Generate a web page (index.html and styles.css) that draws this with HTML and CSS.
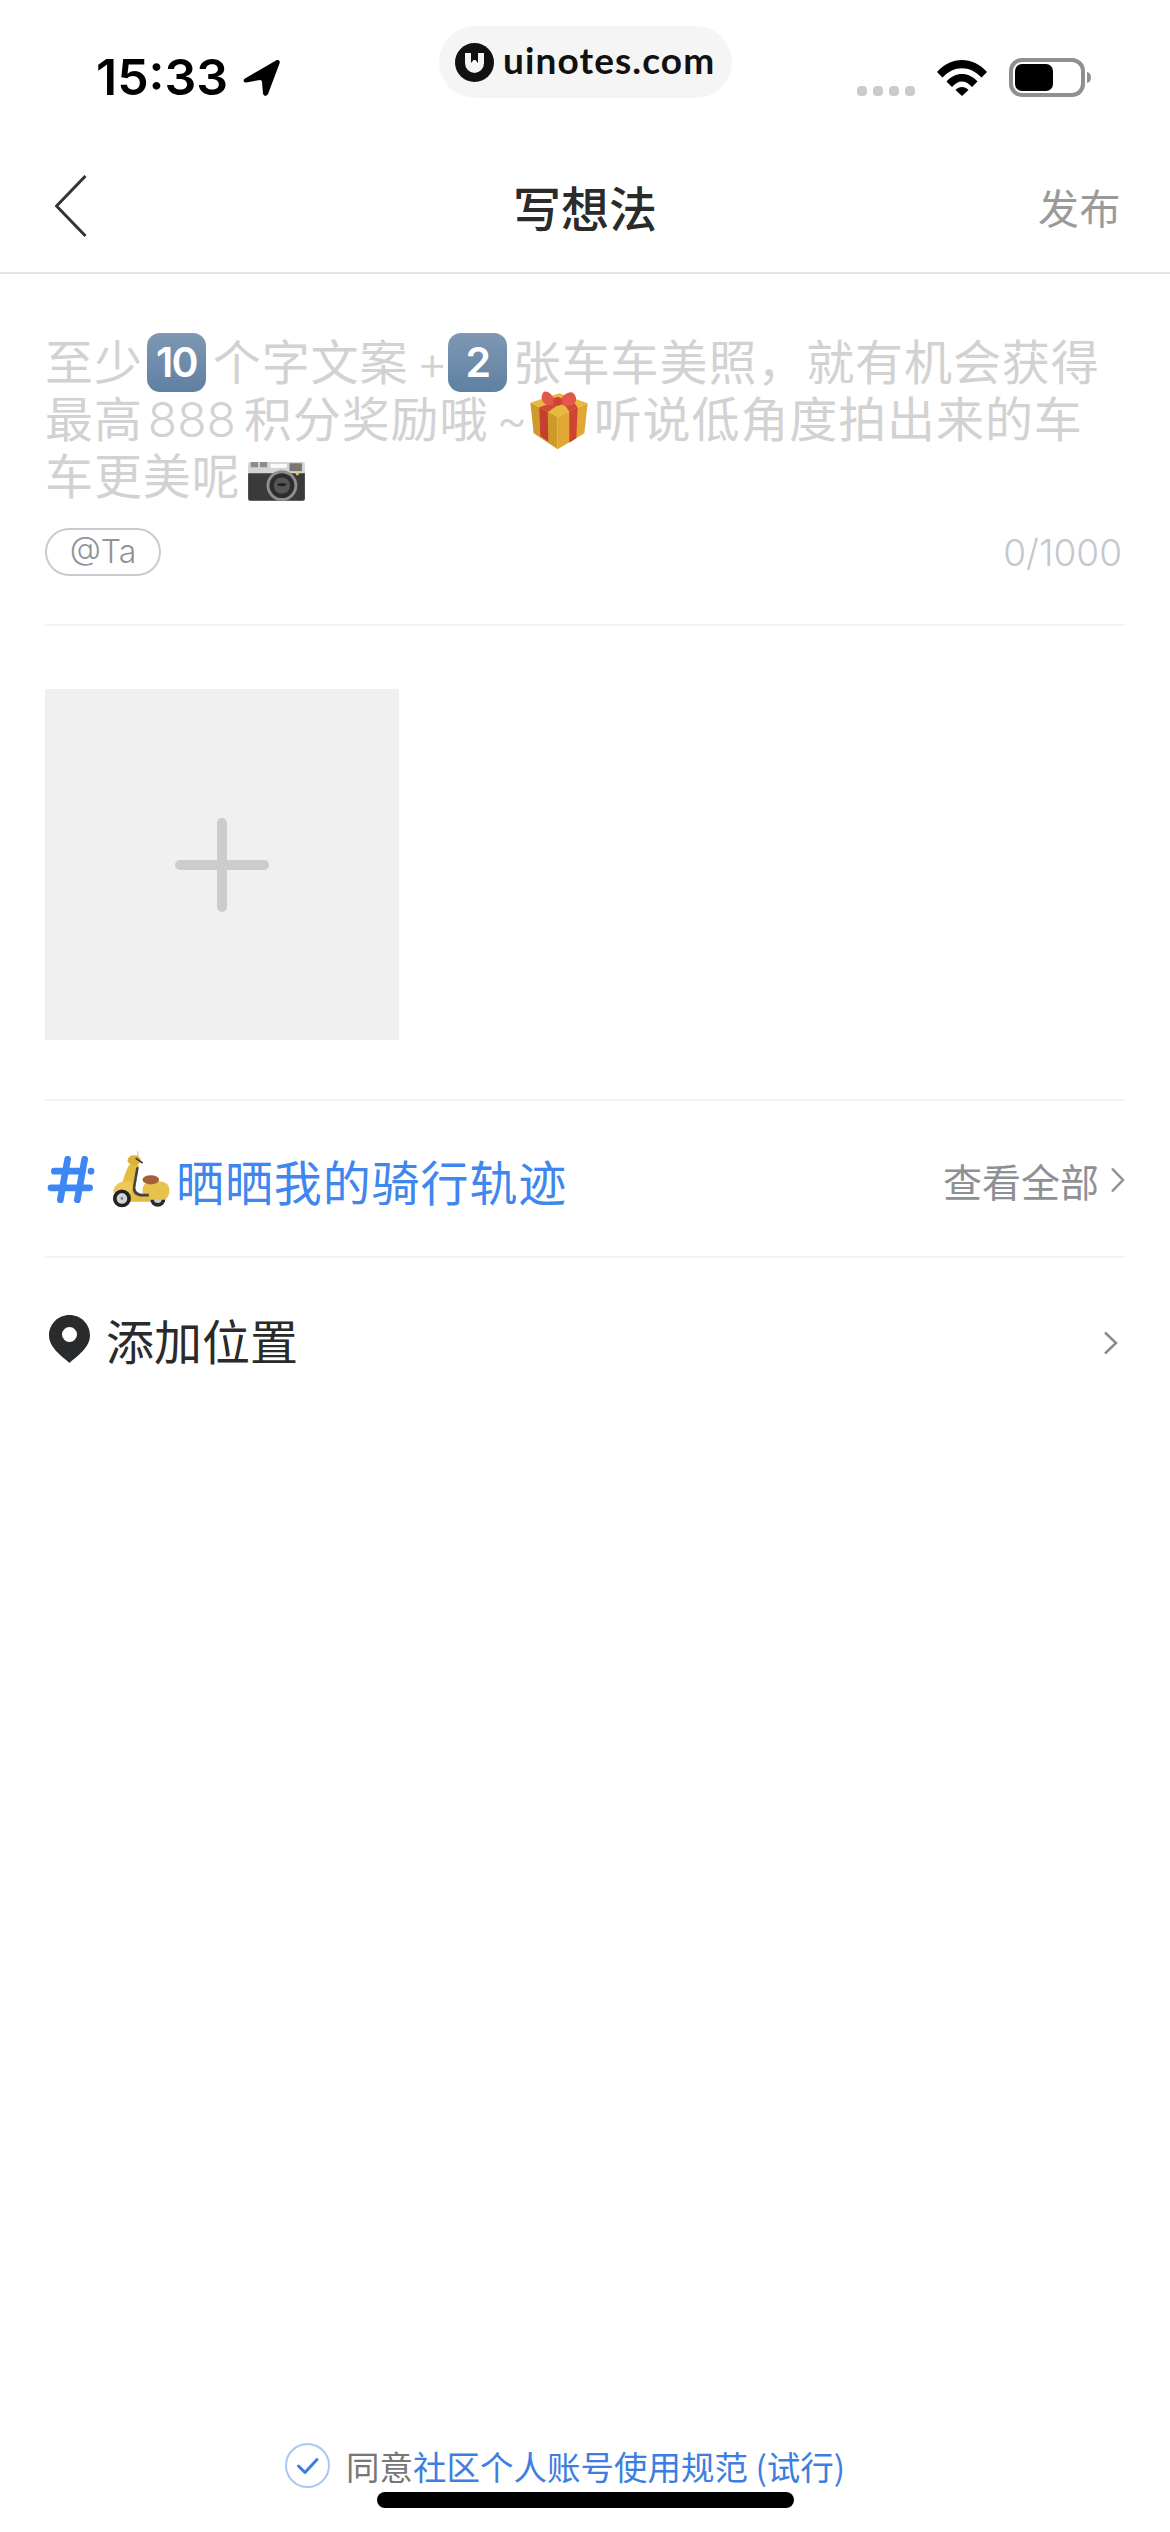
FILE: index.html
```html
<!DOCTYPE html>
<html lang="zh-CN">
<head>
<meta charset="utf-8">
<title>写想法</title>
<link rel="stylesheet" href="styles.css">
</head>
<body>
<div class="page">
  <div class="badge">
    <svg class="badge-logo" viewBox="0 0 39 39"><circle cx="19.5" cy="19.5" r="19.5" fill="#111"/><path d="M10 10h6v10l2.500-3h2l2.500 3V10h6v10a9.500 10 0 0 1-19 0z" fill="#f5f5f5"/></svg>
    <span class="badge-text">uinotes.com</span>
  </div>

  <header class="status">
    <div class="status-left">
      <span class="time">15:33</span>
      <svg class="arrow" viewBox="0 0 38 38"><path d="M2 19.500 33 1.500c2.500-1.300 4.500.5 3.500 3L25 35c-1 2.500-4.500 2.500-5-.5l-1-11.500a2 2 0 0 0-2-2L3 23.500c-3 0-3-2.500-1-4z" fill="#000"/></svg>
    </div>
    <div class="status-right">
      <div class="signal"><i></i><i></i><i></i><i></i></div>
      <svg class="wifi" viewBox="0 0 50 37"><path d="M0 13C14-3 36-3 50 13l-5.500 5.500C33 6 17 6 5.500 18.500z"/><path d="M9.500 22.500C18 12.500 32 12.500 40.500 22.500L35 28C29 20.500 21 20.500 15 28z"/><path d="M18.500 31C22 27 28 27 31.500 31L25 37z"/></svg>
      <svg class="battery" viewBox="0 0 82 39"><rect x="2" y="2" width="72" height="35" rx="11" fill="none" stroke="#8f8f8f" stroke-width="4"/><rect x="6" y="6" width="38" height="27" rx="7" fill="#000"/><path d="M78 14c3 .8 4 3 4 5.500s-1 4.700-4 5.500z" fill="#8f8f8f"/></svg>
    </div>
  </header>

  <nav class="nav">
    <svg class="back" viewBox="0 0 32 62"><path d="M30.500 1 1.500 31l29 30" fill="none" stroke="#333" stroke-width="3"/></svg>
    <h1 class="nav-title">写想法</h1>
    <span class="nav-action">发布</span>
  </nav>

  <main class="content">
    <section class="editor">
      <p class="placeholder">至少<span class="keycap">10</span>个字文案<span class="latin latin-plus">+</span><span class="keycap keycap-single">2</span>张车车美照，就有机会获得<br>最高<span class="latin latin-number">888</span>积分奖励哦<span class="latin latin-tilde">~</span><svg class="emoji" viewBox="24 20 180 180">
        <path d="M28 58 115 30l85 30-90 40z" fill="#e8b83f"/>
        <path d="M28 58l82 42v98l-72-48z" fill="#cf9a2c"/>
        <path d="M110 100l90-40-10 90-80 48z" fill="#e2a732"/>
        <path d="M55 72l25 15 2 88-24-17z" fill="#c63f2e"/>
        <path d="M145 85l25-13-4 93-21 13z" fill="#d0432f"/>
        <path d="M55 72 145 40l25 32-25 13-20-30-45 32z" fill="#d14a36"/>
        <path d="M105 52C85 20 65 15 62 40c-2 22 22 32 43 20z" fill="#e2594b"/>
        <path d="M115 52c22-32 45-32 50-8 3 22-24 30-50 18z" fill="#e2594b"/>
        <ellipse cx="110" cy="54" rx="14" ry="13" fill="#cc4438"/>
      </svg>听说低角度拍出来的车<br>车更美呢<svg class="camera" viewBox="20 25 180 125">
        <rect x="22" y="28" width="173" height="118" rx="6" fill="#d4d4d4"/>
        <path d="M22 62h173v78a6 6 0 0 1-6 6H28a6 6 0 0 1-6-6z" fill="#3a3a3a"/>
        <rect x="30" y="28" width="22" height="16" fill="#8c8c8c"/>
        <rect x="58" y="28" width="22" height="16" fill="#8c8c8c"/>
        <rect x="90" y="34" width="50" height="12" fill="#fafafa"/>
        <rect x="148" y="32" width="38" height="24" fill="#7b7671"/>
        <circle cx="172" cy="64" r="5" fill="#e8c53a"/>
        <circle cx="125" cy="100" r="47" fill="#8e8e8e"/>
        <circle cx="125" cy="100" r="38" fill="#2d2d2d"/>
        <circle cx="125" cy="100" r="25" fill="#565656"/>
        <ellipse cx="125" cy="97" rx="14" ry="5" fill="#222"/>
      </svg></p>
      <div class="editor-meta">
        <span class="mention">@Ta</span>
        <span class="counter">0/1000</span>
      </div>
    </section>

    <section class="photos">
      <div class="photo-add"><svg class="plus" viewBox="0 0 94 94"><path d="M47 5v84M5 47h84" stroke="#ccc" stroke-width="10" stroke-linecap="round" fill="none"/></svg></div>
    </section>

    <section class="row row-topic">
      <div class="row-main">
        <svg class="hash" viewBox="50 85 150 140"><path d="M112 94 90 216M163 94l-22 122M72 130h78M62 180h116" stroke="#3d87f5" stroke-width="20" stroke-linecap="round" fill="none"/><circle cx="182" cy="130" r="10" fill="#3d87f5"/></svg>
        <svg class="scooter" viewBox="245 70 175 170">
          <path d="M322 70l2 18" stroke="#b9c0c6" stroke-width="3"/>
          <circle cx="383" cy="214" r="23" fill="#2a2a2a"/><circle cx="383" cy="214" r="12" fill="#c9c9c9"/>
          <path d="M342 170c22-12 62-14 72 2 8 16 4 34-8 44h-60c-10-14-12-32-4-46z" fill="#e8c24f"/>
          <path d="M296 112c12-10 28-8 30 2l-12 62c-2 10 6 20 20 22h22l4 24h-58c-18-4-28-16-28-38 2-26 10-48 22-72z" fill="#e3bc42"/>
          <path d="M318 118h8l-10 58c-2 12 6 20 18 22h22v8h-26c-16-2-24-12-22-28z" fill="#444"/>
          <ellipse cx="362" cy="156" rx="25" ry="14" fill="#a1603a"/>
          <path d="M248 196c2-26 20-38 54-36 8 16 4 32-4 44-16-14-34-16-50-8z" fill="#eec858"/>
          <circle cx="275" cy="212" r="27" fill="#222"/><circle cx="275" cy="212" r="16" fill="#d2d2d2"/><circle cx="275" cy="212" r="4" fill="#777"/>
          <ellipse cx="312" cy="97" rx="20" ry="15" fill="#d9b03a"/>
          <path d="M318 92l18 12" stroke="#333" stroke-width="5" stroke-linecap="round"/>
        </svg>
        <span class="topic-name">晒晒我的骑行轨迹</span>
      </div>
      <div class="row-side">
        <span class="see-all">查看全部</span>
        <svg class="chevron" viewBox="0 0 15 26"><path d="M2 1.500 13 13 2 24.500" fill="none" stroke="#8e9095" stroke-width="2.500"/></svg>
      </div>
    </section>

    <section class="row row-location">
      <div class="row-main">
        <svg class="pin" viewBox="0 0 41 48"><path fill-rule="evenodd" d="M20.500 0C9 0 0 9 0 20.500 0 33 14 42 20.500 48 27 42 41 33 41 20.500 41 9 32 0 20.500 0zm0 12a7.500 7.500 0 1 1 0 15 7.500 7.500 0 0 1 0-15z" fill="#2a2b2d"/></svg>
        <span class="location-label">添加位置</span>
      </div>
      <svg class="chevron chevron-location" viewBox="0 0 15 24"><path d="M2 1.500 13 12 2 22.500" fill="none" stroke="#8c8c8c" stroke-width="2.500"/></svg>
    </section>
  </main>

  <footer class="footer">
    <div class="agree">
      <svg class="check" viewBox="0 0 45 45"><circle cx="22.500" cy="22.500" r="21.500" fill="#fff" stroke="#a9c8f2" stroke-width="2"/><path d="M13.500 23l6.500 6.500 12-13" fill="none" stroke="#3d7ee0" stroke-width="3" stroke-linecap="round" stroke-linejoin="round"/></svg>
      <span class="agree-text">同意<span class="agree-link">社区个人账号使用规范 (试行)</span></span>
    </div>
    <div class="home-bar"></div>
  </footer>
</div>
</body>
</html>
```
FILE: styles.css
```css
* { box-sizing: border-box; }

html, body { margin: 0; padding: 0; background: #fff; }

body { font-family: "Noto Sans CJK SC", "Noto Sans", sans-serif; }

.page {
  position: relative;
  display: flex;
  flex-direction: column;
  width: 1170px;
  height: 2532px;
  overflow: hidden;
  background: #fff;
}

/* Site badge floating over the status bar */
.badge {
  position: absolute;
  left: 439px;
  top: 26px;
  display: flex;
  align-items: center;
  width: 293px;
  height: 72px;
  padding-left: 16px;
  gap: 9px;
  border-radius: 36px;
  background: #f5f5f5;
}
.badge-logo { width: 39px; height: 39px; flex: none; }
.badge-text {
  font: 700 37px/1 Lato, sans-serif;
  letter-spacing: 1.1px;
  color: #111;
  margin-top: -5px;
}

/* Status bar */
.status {
  display: flex;
  justify-content: space-between;
  align-items: flex-end;
  height: 142px;
  padding: 58px 79px 45px 96px;
}
.status-left { display: flex; align-items: center; gap: 15px; }
.time {
  font: 600 50px/39px Inter, sans-serif;
  color: #000;
}
.arrow { width: 38px; height: 38px; }
.status-right { display: flex; align-items: flex-end; gap: 22px; }
.signal { display: flex; gap: 6px; margin-bottom: 1px; }
.signal i { width: 10px; height: 10px; border-radius: 4px; background: #cbcbcb; }
.wifi { width: 50px; height: 37px; margin-bottom: 1px; }
.battery { width: 82px; height: 39px; }

/* Navigation bar */
.nav {
  display: grid;
  grid-template-columns: 1fr auto 1fr;
  align-items: center;
  height: 132px;
  padding: 0 49px 2px;
  border-bottom: 2px solid #e3e3e3;
}
.back { width: 32px; height: 62px; margin-left: 6px; }
.nav-title {
  margin: 0;
  font-size: 48px;
  font-weight: 500;
  line-height: 60px;
  color: #2b2b2b;
}
.nav-action {
  justify-self: end;
  font-size: 41px;
  line-height: 60px;
  letter-spacing: .5px;
  color: #9a9a9a;
}

/* Form body */
.content { padding: 0 45px; flex: 1; }

.editor {
  padding: 57px 0 48px;
  border-bottom: 2px solid #f2f2f2;
}
.placeholder {
  margin: 0;
  font-size: 48px;
  line-height: 57px;
  letter-spacing: .9px;
  color: #d2d2d2;
  white-space: nowrap;
}
/* Inline pictures hang out of the fixed line height without stretching it;
   the uneven margins lift them slightly above the text's middle */
.keycap {
  display: inline-flex;
  align-items: center;
  justify-content: center;
  width: 59px;
  height: 59px;
  margin: -19px 7px -11px 4px;
  border-radius: 13px;
  background: linear-gradient(#7f98b3, #5f80a2);
  font: 600 41px/1 Inter, sans-serif;
  letter-spacing: -2px;
  color: #fff;
  vertical-align: middle;
}
.keycap.keycap-single { margin-right: 6px; }
.latin {
  margin: 0 8px;
  font-family: Inter, sans-serif;
  font-weight: 300;
  line-height: 0;
  letter-spacing: 0;
}
.latin.latin-plus { margin-right: -4px; }
.latin.latin-number { margin-left: 5px; }
.latin.latin-tilde { margin-right: -4px; }
.emoji {
  width: 60px;
  height: 60px;
  margin: -19px 5px -11px;
  vertical-align: middle;
}
.camera {
  width: 60px;
  height: 41px;
  margin: -20px 0 0 6px;
  vertical-align: -8px;
}

.editor-meta {
  display: flex;
  justify-content: space-between;
  align-items: center;
  margin-top: 26px;
}
.mention {
  display: flex;
  align-items: center;
  justify-content: center;
  width: 116px;
  height: 48px;
  border: 2px solid #c8cbd0;
  border-radius: 24px;
  font: 300 32px/1 Inter, sans-serif;
  color: #8f939a;
}
.counter {
  margin-right: 3px;
  font: 300 37px/1 Inter, sans-serif;
  color: #c4c8ce;
}

.photos {
  padding: 63px 0 59px;
  border-bottom: 2px solid #f2f2f2;
}
.photo-add {
  display: flex;
  align-items: center;
  justify-content: center;
  width: 354px;
  height: 351px;
  background: #f0f0f0;
}
.plus { width: 94px; height: 94px; }

.row {
  display: flex;
  justify-content: space-between;
  align-items: center;
}
.row-topic {
  height: 157px;
  padding-top: 2px;
  border-bottom: 2px solid #f2f2f2;
}
.row-location {
  height: 160px;
  padding-top: 2px;
}
.row-main { display: flex; align-items: center; }
.row-side { display: flex; align-items: center; }

.hash { width: 50px; height: 47px; margin-left: 2px; flex: none; }
.scooter { width: 58px; height: 57px; margin: 0 6px 0 15px; flex: none; }
.topic-name {
  font-size: 48px;
  line-height: 60px;
  letter-spacing: .9px;
  color: #3f86ee;
}
.see-all {
  font-size: 39px;
  line-height: 50px;
  color: #8e9095;
}
.chevron { width: 15px; height: 26px; margin-left: 11px; flex: none; }
.chevron.chevron-location { height: 24px; margin-right: 7px; margin-top: 8px; }

.pin { width: 41px; height: 48px; margin-left: 4px; flex: none; }
.location-label {
  margin-left: 16px;
  font-size: 48px;
  line-height: 60px;
  color: #2a2a2a;
}

/* Agreement line and home indicator */
.footer { display: flex; flex-direction: column; padding-bottom: 24px; }
.agree {
  display: flex;
  align-items: center;
  gap: 16px;
  height: 45px;
  padding-left: 285px;
}
.check { width: 45px; height: 45px; flex: none; }
.agree-text {
  font-size: 33.5px;
  line-height: 45px;
  color: #777;
  white-space: nowrap;
}
.agree-link { color: #3d7ee0; }
.home-bar {
  align-self: center;
  width: 417px;
  height: 16px;
  margin-top: 4px;
  border-radius: 8px;
  background: #000;
}
```
